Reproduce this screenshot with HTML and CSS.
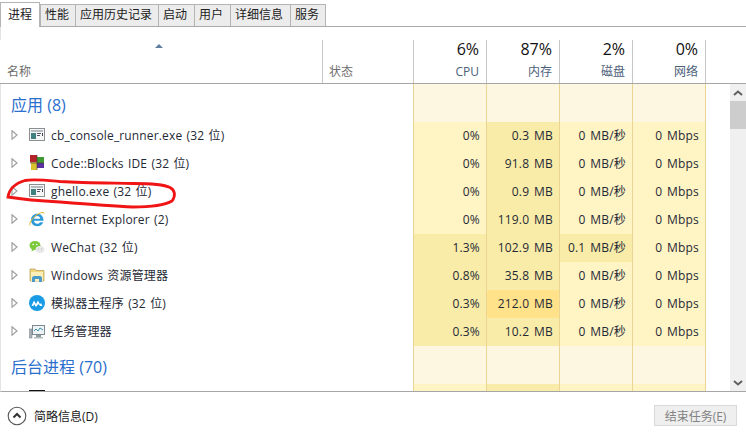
FILE: index.html
```html
<!DOCTYPE html>
<html lang="zh">
<head>
<meta charset="utf-8">
<title>任务管理器</title>
<link rel="stylesheet" href="styles.css">
</head>
<body>
<svg class="defs" width="0" height="0">
  <symbol id="tw" viewBox="0 0 7 10"><path d="M1 .8L6 5L1 9.200Z" fill="#fff" stroke="#a0a0a0" stroke-width="1.200"/></symbol>
  <symbol id="exe" viewBox="0 0 16 16"><rect x=".5" y="1.500" width="15" height="12" fill="#f4f6f6" stroke="#8b8f92"/><rect x="2" y="3" width="12" height="2" fill="#b6bcc0"/><rect x="2" y="6" width="5" height="6" fill="#3f7f7f"/><rect x="8" y="6" width="4" height="1" fill="#556"/><rect x="8" y="8" width="3" height="1" fill="#556"/><rect x="13" y="6" width="1" height="3" fill="#445"/></symbol>
</svg>
<div class="app">
  <nav class="tabs">
    <span class="tab active">进程</span><span class="tab">性能</span><span class="tab">应用历史记录</span><span class="tab">启动</span><span class="tab">用户</span><span class="tab">详细信息</span><span class="tab">服务</span>
  </nav>
  <div class="gap"></div>
  <div class="head">
    <div class="hcell name-h"><svg class="sort" width="8" height="4" viewBox="0 0 8 4"><path d="M0 4L4 0L8 4Z" fill="#5f7f9f"/></svg><span class="hlabel">名称</span></div>
    <div class="hcell status-h"><span class="hlabel">状态</span></div>
    <div class="hcell metric-h"><span class="pct">6%</span><span class="hlabel">CPU</span></div>
    <div class="hcell metric-h"><span class="pct">87%</span><span class="hlabel">内存</span></div>
    <div class="hcell metric-h"><span class="pct">2%</span><span class="hlabel">磁盘</span></div>
    <div class="hcell metric-h"><span class="pct">0%</span><span class="hlabel">网络</span></div>
  </div>
  <div class="body">
    <div class="table">
      <div class="row section"><div class="group">应用 (8)</div><div></div><div class="m"></div><div class="m"></div><div class="m"></div><div class="m"></div></div>

      <div class="row"><div class="pname"><svg class="tw"><use href="#tw"/></svg><svg class="ico"><use href="#exe"/></svg><span>cb_console_runner.exe (32 位)</span></div><div></div><div class="m h1">0%</div><div class="m h2">0.3 MB</div><div class="m h1">0 MB/秒</div><div class="m h1">0 Mbps</div></div>

      <div class="row"><div class="pname"><svg class="tw"><use href="#tw"/></svg><svg class="ico" viewBox="0 0 16 16"><path d="M1 0h7v7.500H1z" fill="#b3242a"/><path d="M8 2h7v6H8z" fill="#3f9a35"/><path d="M2 7.500h6V15H2z" fill="#d8c22e"/><path d="M8 8h7v5H8z" fill="#5b2f9e"/><path d="M8 0v15M1 8h14" stroke="#3a3a3a" stroke-width=".6"/></svg><span>Code::Blocks IDE (32 位)</span></div><div></div><div class="m h1">0%</div><div class="m h2">91.8 MB</div><div class="m h1">0 MB/秒</div><div class="m h1">0 Mbps</div></div>

      <div class="row"><div class="pname"><svg class="tw"><use href="#tw"/></svg><svg class="ico"><use href="#exe"/></svg><span>ghello.exe (32 位)</span></div><div></div><div class="m h1">0%</div><div class="m h2">0.9 MB</div><div class="m h1">0 MB/秒</div><div class="m h1">0 Mbps</div></div>

      <div class="row"><div class="pname"><svg class="tw"><use href="#tw"/></svg><svg class="ico" viewBox="0 0 16 16"><path d="M14.500 9.800H5c.2 2 1.500 3 3.300 3 1.300 0 2.300-.6 2.900-1.500h3c-.9 2.500-3.200 3.900-5.900 3.900C4.600 15.200 2 12.700 2 9c0-3.800 2.700-6.300 6.300-6.300 3.700 0 6.500 2.800 6.200 7.100zM5.100 7.800h6.100C11 6 9.800 5.100 8.200 5.100 6.600 5.100 5.400 6 5.100 7.800z" fill="#2d9bd8"/><path d="M1 14.500C-.5 12 5 5 9 3c3-1.500 6.500-2.500 6-.3" fill="none" stroke="#eeb32f" stroke-width="1"/></svg><span>Internet Explorer (2)</span></div><div></div><div class="m h1">0%</div><div class="m h2">119.0 MB</div><div class="m h1">0 MB/秒</div><div class="m h1">0 Mbps</div></div>

      <div class="row"><div class="pname"><svg class="tw"><use href="#tw"/></svg><svg class="ico" viewBox="0 0 16 16"><ellipse cx="6" cy="6.500" rx="5.500" ry="4.500" fill="#7dc93c"/><path d="M3 10l-.5 2.500L5.500 11z" fill="#7dc93c"/><circle cx="4.200" cy="5.500" r=".8" fill="#fff"/><circle cx="7.800" cy="5.500" r=".8" fill="#fff"/><ellipse cx="11" cy="10.500" rx="4.500" ry="3.500" fill="#e9e9e9"/><circle cx="9.500" cy="10" r=".6" fill="#aaa"/><circle cx="12.500" cy="10" r=".6" fill="#aaa"/></svg><span>WeChat (32 位)</span></div><div></div><div class="m h2">1.3%</div><div class="m h2">102.9 MB</div><div class="m h2">0.1 MB/秒</div><div class="m h1">0 Mbps</div></div>

      <div class="row"><div class="pname"><svg class="tw"><use href="#tw"/></svg><svg class="ico" viewBox="0 0 16 16"><path d="M1 2h5l1 1.500h8V14H1z" fill="#f2d67c" stroke="#b39a4e" stroke-width=".7"/><path d="M2 5h12v9H2z" fill="#fbeeb8"/><path d="M3 15v-4c0-1 1-2 2-2h6c1 0 2 1 2 2v4h-3v-3H6v3z" fill="#4b9ac9"/></svg><span>Windows 资源管理器</span></div><div></div><div class="m h2">0.8%</div><div class="m h2">35.8 MB</div><div class="m h1">0 MB/秒</div><div class="m h1">0 Mbps</div></div>

      <div class="row"><div class="pname"><svg class="tw"><use href="#tw"/></svg><svg class="ico" viewBox="0 0 16 16"><circle cx="8" cy="8" r="8" fill="#1a9be6"/><path d="M2.500 11L5 5.500 7 9l2-3.500 2 3.800 1-1.300 1.500 3h-2.300L9.200 9 7.500 11.500h-1L5.200 9.300 4.300 11z" fill="#fff"/></svg><span>模拟器主程序 (32 位)</span></div><div></div><div class="m h2">0.3%</div><div class="m h3">212.0 MB</div><div class="m h1">0 MB/秒</div><div class="m h1">0 Mbps</div></div>

      <div class="row"><div class="pname"><svg class="tw"><use href="#tw"/></svg><svg class="ico" viewBox="0 0 16 16"><rect x="3.500" y="2.500" width="12" height="9" fill="#eef3f5" stroke="#7d8a90"/><path d="M5 8l2-2 2 2 2-3 3 2" fill="none" stroke="#3f8fa8"/><rect x="7" y="12" width="5" height="2" fill="#8f9a9f"/><rect x="5" y="14" width="9" height="1.500" fill="#b4bcc0"/><rect x=".5" y="6" width="2.500" height="9" fill="#a8b2b6" stroke="#747e82" stroke-width=".5"/></svg><span>任务管理器</span></div><div></div><div class="m h2">0.3%</div><div class="m h2">10.2 MB</div><div class="m h1">0 MB/秒</div><div class="m h1">0 Mbps</div></div>

      <div class="row section"><div class="group">后台进程 (70)</div><div></div><div class="m"></div><div class="m"></div><div class="m"></div><div class="m"></div></div>

      <div class="row clip"><div class="pname"><svg class="tw"><use href="#tw"/></svg><svg class="ico" viewBox="0 0 16 16"><rect width="16" height="3" fill="#111"/><rect y="1" x="2" width="5" height="3" fill="#e02020"/><rect y="1" x="9" width="5" height="3" fill="#e02020"/></svg></div><div></div><div class="m h1"></div><div class="m h2"></div><div class="m h1"></div><div class="m h1"></div></div>
    </div>
    <div class="scrollbar">
      <div class="sbtn"><svg width="10" height="6" viewBox="0 0 10 6"><path d="M1 5l4-3.500L9 5" fill="none" stroke="#606060" stroke-width="2"/></svg></div>
      <div class="thumb"></div>
      <div class="track"></div>
      <div class="sbtn"><svg width="10" height="6" viewBox="0 0 10 6"><path d="M1 1l4 3.500L9 1" fill="none" stroke="#606060" stroke-width="2"/></svg></div>
    </div>
  </div>
  <footer class="foot">
    <div class="less"><svg width="20" height="20" viewBox="0 0 20 20"><circle cx="10" cy="10" r="8.800" fill="none" stroke="#555" stroke-width="1.100"/><path d="M6.500 11.500L10 8l3.500 3.500" fill="none" stroke="#333" stroke-width="2"/></svg><span>简略信息(D)</span></div>
    <button class="end" disabled>结束任务(E)</button>
  </footer>
  <svg class="mark" width="746" height="441" viewBox="0 0 746 441"><path d="M8 197C9 190 13 184 25 180.500C34 179 43 180 60 181.500C85 183 110 183 133 183.500C150 183.500 163 184 170 187.500C175 190 176 196 172 201C165 205 150 207 133 207C110 206 85 204 60 202C40 201 20 199 8 197Z" fill="none" stroke="#f01414" stroke-width="2.800"/></svg>
</div>
</body>
</html>
```
FILE: styles.css
```css
* { box-sizing: border-box; }
html, body { margin: 0; padding: 0; }
body { width: 746px; height: 441px; overflow: hidden; background: #fff; font-family: "Open Sans", "Noto Sans CJK SC", sans-serif; font-size: 12px; color: #1a1a1a; }
.defs { position: absolute; }
.app { position: relative; width: 746px; height: 441px; display: flex; flex-direction: column; }

.tabs { height: 27px; padding-top: 4px; display: flex; align-items: stretch; border-bottom: 1px solid #a9a9a9; }
.tab { height: 22px; padding: 0 4px; margin-left: -1px; font-size: 12px; line-height: 20px; background: #ececec; border: 1px solid #b4b4b4; border-bottom: 0; color: #222; white-space: nowrap; position: relative; }
.tab:nth-child(2) { width: 36px; margin-left: 0; }
.tab:nth-child(3) { width: 84px; }
.tab:nth-child(4), .tab:nth-child(5) { width: 37px; }
.tab:nth-child(6) { width: 61px; }
.tab:nth-child(7) { width: 36px; }
.tab.active { width: 40px; height: 25px; margin: -2px 0 0 0; padding: 2px 7px 0; background: #fff; border-color: #b4b4b4; z-index: 1; }

.gap { height: 13px; border-left: 1px solid #e4e4e4; }

.head { display: grid; grid-template-columns: 323px 91px 73px 73px 73px 73px; height: 44px; border-bottom: 1px solid #a6a6a6; flex: none; }
.hcell { position: relative; display: flex; flex-direction: column; justify-content: flex-end; border-right: 1px solid #c6c6c6; height: 43px; padding: 0 6px 4px; color: #4c607a; }
.name-h, .status-h { padding-left: 7px; padding-bottom: 3px; color: #6d6d6d; }
.status-h { padding-left: 6px; }
.sort { position: absolute; left: 155px; top: 4px; }
.metric-h { align-items: flex-end; justify-content: space-between; padding: 0 7px 3px 0; }
.pct { font-size: 16px; line-height: 18px; color: #111; }
.hlabel { font-size: 12px; line-height: 17px; }

.body { display: flex; height: 308px; flex: none; overflow: hidden; border-bottom: 1px solid #a6a6a6; border-left: 1px solid #e4e4e4; }
.table { width: 705px; flex: none; }
.row { display: grid; grid-template-columns: 322px 90px 74px 73px 73px 73px; height: 28px; align-items: stretch; }
.section { height: 38px; }
.clip { height: 8px; overflow: hidden; }
.group { font-size: 16px; color: #2a6fcd; line-height: 38px; padding-left: 10px; padding-top: 2px; white-space: nowrap; }
.pname { display: flex; align-items: center; white-space: nowrap; padding: 0 0 2px 10px; color: #1f2a36; letter-spacing: .15px; word-spacing: 1px; }
.clip .pname { align-items: flex-start; padding-top: 6px; }
.tw { width: 7px; height: 10px; margin-right: 11px; flex: none; }
.clip .tw { visibility: hidden; }
.ico { width: 16px; height: 16px; flex: none; margin-right: 6px; }
.m { text-align: right; padding-right: 6px; line-height: 27px; background: #fdf6e0; border-right: 1px solid #ead595; color: #1f2a36; white-space: nowrap; letter-spacing: .2px; word-spacing: 1.5px; }
.m:nth-child(3) { border-left: 1px solid #ead595; }
.h1 { background: #fff4c4; }
.h2 { background: #f9eca8; }
.h3 { background: #ffe28a; }

.scrollbar { width: 16px; margin-left: 24px; flex: none; display: flex; flex-direction: column; background: #f0f0f0; }
.sbtn { height: 17px; flex: none; display: flex; align-items: center; justify-content: center; }
.thumb { height: 28px; flex: none; background: #cdcdcd; }
.track { flex: 1; }

.foot { flex: 1; display: flex; align-items: center; justify-content: space-between; padding: 0 9px 2px 7px; }
.less { display: flex; align-items: center; gap: 7px; color: #1a1a1a; }
.end { width: 83px; height: 21px; padding: 0; font: inherit; color: #838383; background: #efefef; border: 1px solid #d9d9d9; }

.mark { position: absolute; left: 0; top: 0; pointer-events: none; }
```
